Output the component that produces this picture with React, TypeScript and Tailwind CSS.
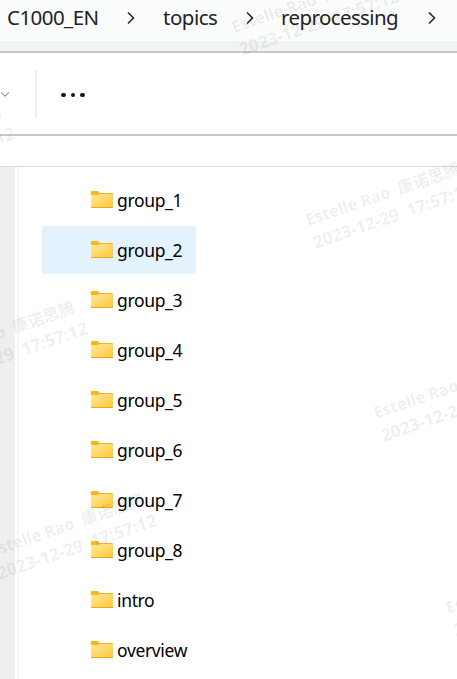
import React from "react";

const folders = [
  "group_1", "group_2", "group_3", "group_4", "group_5",
  "group_6", "group_7", "group_8", "intro", "overview",
];

const stamps = [
  { x: 235, y: 33 },
  { x: 309, y: 226 },
  { x: 377, y: 419 },
  { x: 449, y: 614 },
  { x: -149, y: 170 },
  { x: -76, y: 365 },
  { x: -7, y: 557 },
];

function Chevron() {
  return (
    <svg className="h-3 w-2 shrink-0" viewBox="0 0 8 12" fill="none" stroke="#222" strokeWidth="1.5">
      <path d="M1 0.5 L6.5 6 L1 11.5" />
    </svg>
  );
}

function Folder() {
  return (
    <svg className="h-[18px] w-[22px] shrink-0" viewBox="0 0 22 18">
      <defs>
        <linearGradient id="folder" x1="0" y1="0" x2="1" y2="1">
          <stop offset="0" stopColor="#ffe8a0" />
          <stop offset="1" stopColor="#fdc832" />
        </linearGradient>
      </defs>
      <path d="M0 0.8 Q0 0 0.8 0 H6.6 L8.6 2 H21.2 Q22 2 22 2.8 V6 H0 Z" fill="#f4b223" />
      <path d="M0 4 H6.8 L8.6 3 H22 V17 H0 Z" fill="url(#folder)" />
      <path d="M0 4 V0.8 Q0 0 0.8 0 H6.6 L8.4 2 L6.8 4 Z" fill="#fbb815" />
      <path d="M0 16 H22 V16.4 Q22 17 21.4 17 H0.6 Q0 17 0 16.4 Z" fill="#e9a820" />
    </svg>
  );
}

export default function App() {
  return (
    <div className="relative flex h-[679px] w-[457px] flex-col overflow-hidden bg-white font-['Noto_Sans','Noto_Sans_CJK_SC',sans-serif]">
      <nav className="flex h-[41px] shrink-0 items-center bg-[#fbfdfc] pb-[5px] pl-[7px] text-[20.5px] leading-none text-[#222]">
        <span className="w-[120px] pb-0.5 tracking-[-0.55px]">C1000_EN</span>
        <Chevron />
        <span className="ml-7 w-[83px] pb-0.5 tracking-[-0.5px]">topics</span>
        <Chevron />
        <span className="ml-[27px] w-[147px] pb-0.5 tracking-[-0.6px]">reprocessing</span>
        <Chevron />
      </nav>
      <div className="h-3 shrink-0 border-b-2 border-[#c5cac9] bg-[#f1f4f4]" />
      <div className="flex h-[83px] shrink-0 items-center border-b-2 border-[#c6c9c8]">
        <svg className="mt-0.5 h-[5px] w-[10px] shrink-0" viewBox="0 0 10 5" fill="none" stroke="#666">
          <path d="M1 0.5 L5 4.3 L9 0.5" />
        </svg>
        <div className="ml-[25px] h-12 w-0.5 bg-[#ededed]" />
        <div className="mt-[3px] ml-6 flex gap-[5px]">
          <span className="size-[4.5px] rounded-full bg-[#181818]" />
          <span className="size-[4.5px] rounded-full bg-[#181818]" />
          <span className="size-[4.5px] rounded-full bg-[#181818]" />
        </div>
      </div>
      <div className="h-[31px] shrink-0 border-b border-[#d9dbdb]" />
      <main className="flex flex-1 overflow-hidden">
        <div className="w-[15px] bg-[#efefef]" />
        <div className="ml-0.5 w-0.5 bg-[#f7f7f7]" />
        <ul className="ml-[23px] flex flex-col gap-0.5 pt-[9px]">
          {folders.map((name) => (
            <li
              key={name}
              className={`flex h-12 w-[154px] shrink-0 items-center gap-1 rounded-xs pl-[49px] ${name === "group_2" ? "bg-[#e4f2fe]" : ""}`}
            >
              <span className="pb-[1px]"><Folder /></span>
              <span className="pt-px text-[17.5px] leading-none tracking-[-0.35px] text-black">{name}</span>
            </li>
          ))}
        </ul>
      </main>
      <div className="pointer-events-none absolute inset-0 overflow-hidden font-bold whitespace-pre text-black/8">
        {stamps.map((s) => (
          <div
            key={s.y}
            className="absolute h-[46px] w-[190px] origin-[0_17px] rotate-[-19deg]"
            style={{ left: s.x - 1, top: s.y - 17 }}
          >
            <div className="h-[23px] text-[16.3px] leading-[23px]">{"Estelle Rao  康诺思腾"}</div>
            <div className="h-[23px] text-[17.2px] leading-[23px]">{"2023-12-29  17:57:12"}</div>
          </div>
        ))}
      </div>
    </div>
  );
}
